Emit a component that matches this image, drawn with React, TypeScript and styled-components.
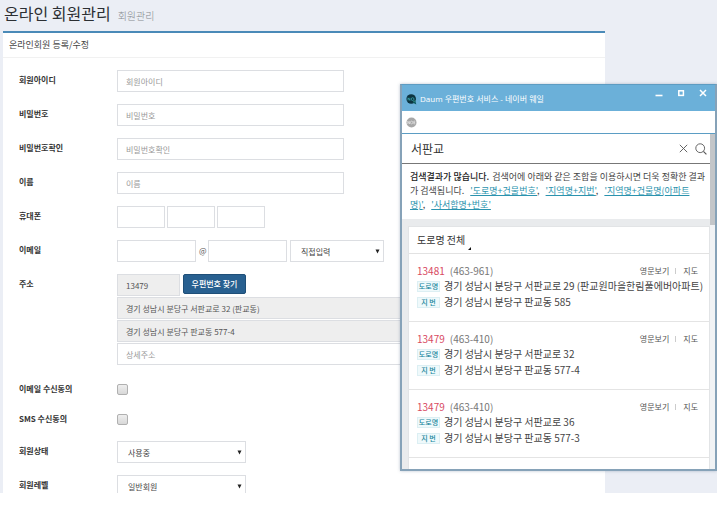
import React from "react";
import styled, { createGlobalStyle } from "styled-components";

const GlobalStyle = createGlobalStyle`
  *, *::before, *::after { box-sizing: border-box; }
  body {
    margin: 0;
    background: #fff;
    color: #333;
    font-family: "Noto Sans CJK KR", "Noto Sans", sans-serif;
    font-size: 8px;
  }
  button, input, select { font: inherit; color: inherit; margin: 0; }
  h1, h2, p, ul { margin: 0; padding: 0; }
  ul { list-style: none; }
`;

const Page = styled.div`
  position: relative;
  height: calc(100vh - 15px);
  margin-right: 3px;
  padding-left: 3px;
  overflow: hidden;
  background: #ebeef5;
`;

const PageHeader = styled.header`
  display: flex;
  align-items: baseline;
  gap: 7px;
  height: 31px;
  padding-left: 1px;
  line-height: 26px;
`;

const PageTitle = styled.h1`
  font-size: 16px;
  font-weight: 400;
  color: #2c2f33;
`;

const PageSubtitle = styled.span`
  font-size: 10px;
  font-weight: 300;
  color: #85898e;
`;

const Panel = styled.main`
  margin-right: 112px;
  background: #fff;
  border-top: 2px solid #4a8ab8;
`;

const PanelTitle = styled.h2`
  height: 25px;
  padding-left: 6px;
  border-bottom: 1px solid #f1f1f1;
  font-size: 9px;
  font-weight: 400;
  line-height: 24px;
  color: #444;
`;

const Form = styled.form`
  display: flex;
  flex-direction: column;
  gap: 12px;
  padding: 12px 16px;
`;

const Row = styled.div`
  display: grid;
  grid-template-columns: 98px 1fr;
  align-items: start;
`;

const RowLabel = styled.label`
  line-height: 20px;
  font-weight: 700;
  color: #333;
`;

const Controls = styled.div<{ $gap?: number }>`
  display: flex;
  align-items: flex-start;
  gap: ${(p) => p.$gap ?? 3}px;
`;

const Stack = styled.div`
  display: flex;
  flex-direction: column;
  gap: 1px;
`;

const TextBox = styled.input<{ $width?: number }>`
  width: ${(p) => (p.$width ? `${p.$width}px` : "100%")};
  height: 22px;
  padding: 0 8px;
  border: 1px solid #dcdee2;
  border-radius: 0;
  background: #fff;
  color: #555;
  outline: none;
  &::placeholder { color: #999; opacity: 1; }
  &:read-only { background: #eee; }
`;

const At = styled.span`
  width: 6px;
  line-height: 22px;
  color: #555;
`;

const SelectFrame = styled.span<{ $width: number }>`
  position: relative;
  display: block;
  width: ${(p) => p.$width}px;
  height: 22px;
  svg {
    position: absolute;
    right: 4px;
    top: 9px;
    pointer-events: none;
  }
`;

const SelectBox = styled.select`
  display: block;
  appearance: none;
  width: 100%;
  height: 22px;
  padding: 0 16px 0 10px;
  border: 1px solid #dcdee2;
  border-radius: 0;
  background: #fff;
  color: #444;
`;

const FindButton = styled.button`
  width: 63px;
  height: 20px;
  padding: 0;
  border: 1px solid #1f4f78;
  border-radius: 2px;
  background: #286090;
  color: #fff;
  font-weight: 500;
  line-height: 16px;
`;

const CheckGroup = styled.div`
  display: flex;
  flex-direction: column;
  gap: 10px;
  padding-top: 2px;
`;

const CheckRow = styled(Row)`
  height: 20px;
  align-items: center;
`;

const CheckBox = styled.input`
  appearance: none;
  width: 11px;
  height: 11px;
  border: 1px solid #b0b0b0;
  border-radius: 2px;
  background: linear-gradient(#eee, #d8d8d8);
  &:checked { background: #6f9fc4; }
`;

const Popup = styled.section`
  position: absolute;
  top: 84px;
  right: 0;
  bottom: 22px;
  width: 317px;
  display: flex;
  flex-direction: column;
  border: 2px solid #86a2b8;
  border-top: 1px solid #5d9cc2;
  background: #e9ebed;
  box-shadow: 0 0 3px rgba(60, 90, 120, 0.35);
  overflow: hidden;
`;

const TitleBar = styled.div`
  display: flex;
  flex: none;
  align-items: center;
  height: 26px;
  padding: 2px 8px 0 4px;
  background: #6bb0d9;
  color: #fff;
`;

const WindowTitle = styled.span`
  flex: 1;
  padding-left: 3px;
  font-family: "Open Sans", "Noto Sans CJK KR", sans-serif;
  line-height: 12px;
`;

const WindowButtons = styled.div`
  display: flex;
  align-self: flex-start;
  gap: 14px;
  height: 12px;
`;

const IconButton = styled.button`
  display: flex;
  align-items: center;
  padding: 0;
  border: 0;
  background: none;
`;

const AddressBar = styled.div`
  display: flex;
  flex: none;
  align-items: center;
  height: 23px;
  padding-left: 4px;
  border-bottom: 1px solid #5b9dc4;
  background: #fff;
`;

const Viewport = styled.div`
  display: flex;
  flex: 1;
  min-height: 0;
`;

const Content = styled.div`
  display: flex;
  flex: 1;
  flex-direction: column;
  min-width: 0;
`;

const ScrollTrack = styled.div`
  flex: none;
  width: 5px;
  background: #f1f3f5;
`;

const ScrollThumb = styled.div`
  height: 91px;
  background: #c3c6c9;
`;

const SearchBar = styled.form`
  display: flex;
  flex: none;
  align-items: center;
  gap: 7px;
  height: 30px;
  padding: 0 3px 0 9px;
  border-bottom: 1px solid #777;
  background: #fff;
`;

const SearchInput = styled.input`
  flex: 1;
  min-width: 0;
  height: 28px;
  padding: 0;
  border: 0;
  outline: none;
  font-size: 12px;
  color: #333;
`;

const Notice = styled.p`
  flex: none;
  height: 55px;
  && { padding: 6px 0 0 8px; }
  background: #fff;
  font-size: 9px;
  line-height: 14px;
  color: #444;
  strong { font-weight: 500; color: #222; margin-right: 1px; }
`;

const Hint = styled.a`
  margin-left: 4px;
  color: #2b93ae;
  text-decoration: underline;
`;

const Card = styled.div`
  flex: 1;
  margin: 7px 0 0 6px;
  border: 1px solid #e2e4e6;
  border-bottom: 0;
  background: #fff;
`;

const FilterBar = styled.div`
  height: 27px;
  padding: 0 8px;
  border-bottom: 1px solid #e2e2e2;
`;

const FilterButton = styled.button`
  display: flex;
  gap: 3px;
  height: 26px;
  padding: 0;
  border: 0;
  background: none;
  font-size: 10px;
  line-height: 26px;
  color: #333;
  svg { align-self: flex-end; margin-bottom: 3px; }
`;

const Result = styled.li`
  height: 68px;
  padding: 9px 11px 0 8px;
  border-bottom: 1px solid #e4e4e4;
`;

const ResultHead = styled.div`
  display: flex;
  align-items: center;
  height: 15px;
  font-size: 10px;
  line-height: 15px;
`;

const ZipCode = styled.span`
  margin-right: 5px;
  color: #d84a5f;
`;

const OldZip = styled.span`
  flex: 1;
  color: #777;
`;

const SmallLink = styled.a`
  font-size: 8px;
  color: #555;
  text-decoration: none;
  & + & {
    margin-left: 6px;
    padding-left: 8px;
    background: linear-gradient(#ccc, #ccc) left center / 1px 6px no-repeat;
  }
`;

const AddressLine = styled.div`
  display: flex;
  align-items: center;
  height: 16px;
  font-size: 10px;
  line-height: 16px;
  color: #444;
  white-space: nowrap;
`;

const Tag = styled.span`
  flex: none;
  width: 23px;
  height: 11px;
  margin-right: 4px;
  border: 1px solid #dceff3;
  background: #eff9fb;
  font-size: 7px;
  font-weight: 500;
  line-height: 9px;
  text-align: center;
  color: #16859c;
`;

const CaretDown = () => (
  <svg width="5" height="5" viewBox="0 0 5 5" aria-hidden="true">
    <path d="M0.5 0.5h4L2.5 4.5z" fill="#222" />
  </svg>
);

const SiteLogo = () => (
  <svg width="11" height="11" viewBox="0 0 11 11" aria-hidden="true">
    <circle cx="5.2" cy="5" r="4.8" fill="#0d3440" />
    <path d="M6.5 8.5 10.3 10.5 9.3 6.8z" fill="#0d5a5c" />
    <path d="M2 6.4V3.8l1.8 2.6V3.8" fill="none" stroke="#38a6ad" strokeWidth="0.8" />
    <circle cx="6.6" cy="5.1" r="1.4" fill="none" stroke="#38a6ad" strokeWidth="0.8" />
    <path d="M7.5 8l1.6-1.6" stroke="#4cc3a8" strokeWidth="0.8" />
  </svg>
);

const PageBadge = () => (
  <svg width="11" height="11" viewBox="0 0 11 11" aria-hidden="true">
    <circle cx="5.5" cy="5.5" r="5" fill="#a7a7a7" />
    <path d="M1.8 7V4.2L3.6 7V4.2M9.3 4.2H7.8v2.6h1.5M7.8 5.5h1.3" fill="none" stroke="#e5e5e5" strokeWidth="0.7" />
    <ellipse cx="5.6" cy="5.5" rx="1.1" ry="1.4" fill="none" stroke="#e5e5e5" strokeWidth="0.7" />
  </svg>
);

type DropdownProps = { id: string; width: number; value: string; label?: string };

const Dropdown = ({ id, width, value, label }: DropdownProps) => (
  <SelectFrame $width={width}>
    <SelectBox id={id} aria-label={label} defaultValue={value}>
      <option>{value}</option>
    </SelectBox>
    <CaretDown />
  </SelectFrame>
);

const basicFields = [
  { id: "member-id", label: "회원아이디", type: "text" },
  { id: "password", label: "비밀번호", type: "password" },
  { id: "password-check", label: "비밀번호확인", type: "password" },
  { id: "name", label: "이름", type: "text" },
];

const results = [
  {
    zip: "13481",
    old: "(463-961)",
    road: "경기 성남시 분당구 서판교로 29 (판교원마을한림풀에버아파트)",
    lot: "경기 성남시 분당구 판교동 585",
  },
  { zip: "13479", old: "(463-410)", road: "경기 성남시 분당구 서판교로 32", lot: "경기 성남시 분당구 판교동 577-4" },
  { zip: "13479", old: "(463-410)", road: "경기 성남시 분당구 서판교로 36", lot: "경기 성남시 분당구 판교동 577-3" },
];

const MemberForm = () => (
  <Form onSubmit={(e) => e.preventDefault()}>
    {basicFields.map((f) => (
      <Row key={f.id}>
        <RowLabel htmlFor={f.id}>{f.label}</RowLabel>
        <TextBox id={f.id} type={f.type} placeholder={f.label} $width={227} />
      </Row>
    ))}
    <Row>
      <RowLabel htmlFor="phone-1">휴대폰</RowLabel>
      <Controls $gap={2}>
        <TextBox id="phone-1" $width={48} />
        <TextBox aria-label="휴대폰 가운데 자리" $width={48} />
        <TextBox aria-label="휴대폰 끝자리" $width={48} />
      </Controls>
    </Row>
    <Row>
      <RowLabel htmlFor="email">이메일</RowLabel>
      <Controls>
        <TextBox id="email" $width={79} />
        <At>@</At>
        <TextBox aria-label="이메일 도메인" $width={79} />
        <Dropdown id="email-domain" width={94} value="직접입력" label="이메일 도메인 선택" />
      </Controls>
    </Row>
    <Row>
      <RowLabel htmlFor="zip">주소</RowLabel>
      <Stack>
        <Controls>
          <TextBox id="zip" readOnly defaultValue="13479" $width={63} />
          <FindButton type="button">우편번호 찾기</FindButton>
        </Controls>
        <TextBox aria-label="도로명 주소" readOnly defaultValue="경기 성남시 분당구 서판교로 32 (판교동)" />
        <TextBox aria-label="지번 주소" readOnly defaultValue="경기 성남시 분당구 판교동 577-4" />
        <TextBox aria-label="상세주소" placeholder="상세주소" />
      </Stack>
    </Row>
    <CheckGroup>
      <CheckRow>
        <RowLabel htmlFor="mail-ok">이메일 수신동의</RowLabel>
        <CheckBox id="mail-ok" type="checkbox" />
      </CheckRow>
      <CheckRow>
        <RowLabel htmlFor="sms-ok">SMS 수신동의</RowLabel>
        <CheckBox id="sms-ok" type="checkbox" />
      </CheckRow>
    </CheckGroup>
    <Row>
      <RowLabel htmlFor="status">회원상태</RowLabel>
      <Dropdown id="status" width={129} value="사용중" />
    </Row>
    <Row>
      <RowLabel htmlFor="level">회원레벨</RowLabel>
      <Dropdown id="level" width={129} value="일반회원" />
    </Row>
  </Form>
);

const PostcodePopup = () => (
  <Popup aria-label="우편번호 서비스">
    <TitleBar>
      <SiteLogo />
      <WindowTitle>Daum 우편번호 서비스 - 네이버 웨일</WindowTitle>
      <WindowButtons>
        <IconButton type="button" aria-label="최소화">
          <svg width="8" height="8" viewBox="0 0 8 8">
            <path d="M0.5 6.5h7" stroke="#fff" strokeWidth="1.6" />
          </svg>
        </IconButton>
        <IconButton type="button" aria-label="최대화">
          <svg width="8" height="8" viewBox="0 0 8 8">
            <rect x="1.8" y="1.8" width="4.6" height="4.6" fill="none" stroke="#fff" strokeWidth="1.5" />
          </svg>
        </IconButton>
        <IconButton type="button" aria-label="닫기">
          <svg width="8" height="8" viewBox="0 0 8 8">
            <path d="M1 1l6 6M7 1L1 7" stroke="#fff" strokeWidth="1.5" />
          </svg>
        </IconButton>
      </WindowButtons>
    </TitleBar>
    <AddressBar>
      <PageBadge />
    </AddressBar>
    <Viewport>
      <Content>
        <SearchBar onSubmit={(e) => e.preventDefault()}>
          <SearchInput aria-label="주소 검색" defaultValue="서판교" />
          <IconButton type="button" aria-label="지우기">
            <svg width="9" height="9" viewBox="0 0 9 9">
              <path d="M0.8 0.8l7.4 7.4M8.2 0.8L0.8 8.2" stroke="#555" strokeWidth="0.9" />
            </svg>
          </IconButton>
          <IconButton type="submit" aria-label="검색">
            <svg width="12" height="12" viewBox="0 0 12 12">
              <circle cx="5.2" cy="5.2" r="4.4" fill="none" stroke="#555" strokeWidth="0.9" />
              <path d="M8.4 8.4l3 3" stroke="#555" strokeWidth="1.1" />
            </svg>
          </IconButton>
        </SearchBar>
        <Notice>
          <strong>검색결과가 많습니다.</strong> 검색어에 아래와 같은 조합을 이용하시면 더욱 정확한 결과가 검색됩니다.{" "}
          <Hint href="#road">'도로명+건물번호'</Hint>, <Hint href="#lot">'지역명+지번'</Hint>,{" "}
          <Hint href="#building">
            '지역명+건물명(아파트
            <br />
            명)'
          </Hint>
          , <Hint href="#pobox">'사서함명+번호'</Hint>
        </Notice>
        <Card>
          <FilterBar>
            <FilterButton type="button">
              도로명 전체
              <svg width="3" height="3" viewBox="0 0 3 3" aria-hidden="true">
                <path d="M3 0v3H0z" fill="#111" />
              </svg>
            </FilterButton>
          </FilterBar>
          <ul>
            {results.map((r) => (
              <Result key={r.road}>
                <ResultHead>
                  <ZipCode>{r.zip}</ZipCode>
                  <OldZip>{r.old}</OldZip>
                  <SmallLink href="#english">영문보기</SmallLink>
                  <SmallLink href="#map">지도</SmallLink>
                </ResultHead>
                <AddressLine>
                  <Tag>도로명</Tag>
                  {r.road}
                </AddressLine>
                <AddressLine>
                  <Tag>지 번</Tag>
                  {r.lot}
                </AddressLine>
              </Result>
            ))}
          </ul>
        </Card>
      </Content>
      <ScrollTrack>
        <ScrollThumb />
      </ScrollTrack>
    </Viewport>
  </Popup>
);

export default function App() {
  return (
    <>
      <GlobalStyle />
      <Page>
        <PageHeader>
          <PageTitle>온라인 회원관리</PageTitle>
          <PageSubtitle>회원관리</PageSubtitle>
        </PageHeader>
        <Panel>
          <PanelTitle>온라인회원 등록/수정</PanelTitle>
          <MemberForm />
        </Panel>
        <PostcodePopup />
      </Page>
    </>
  );
}
